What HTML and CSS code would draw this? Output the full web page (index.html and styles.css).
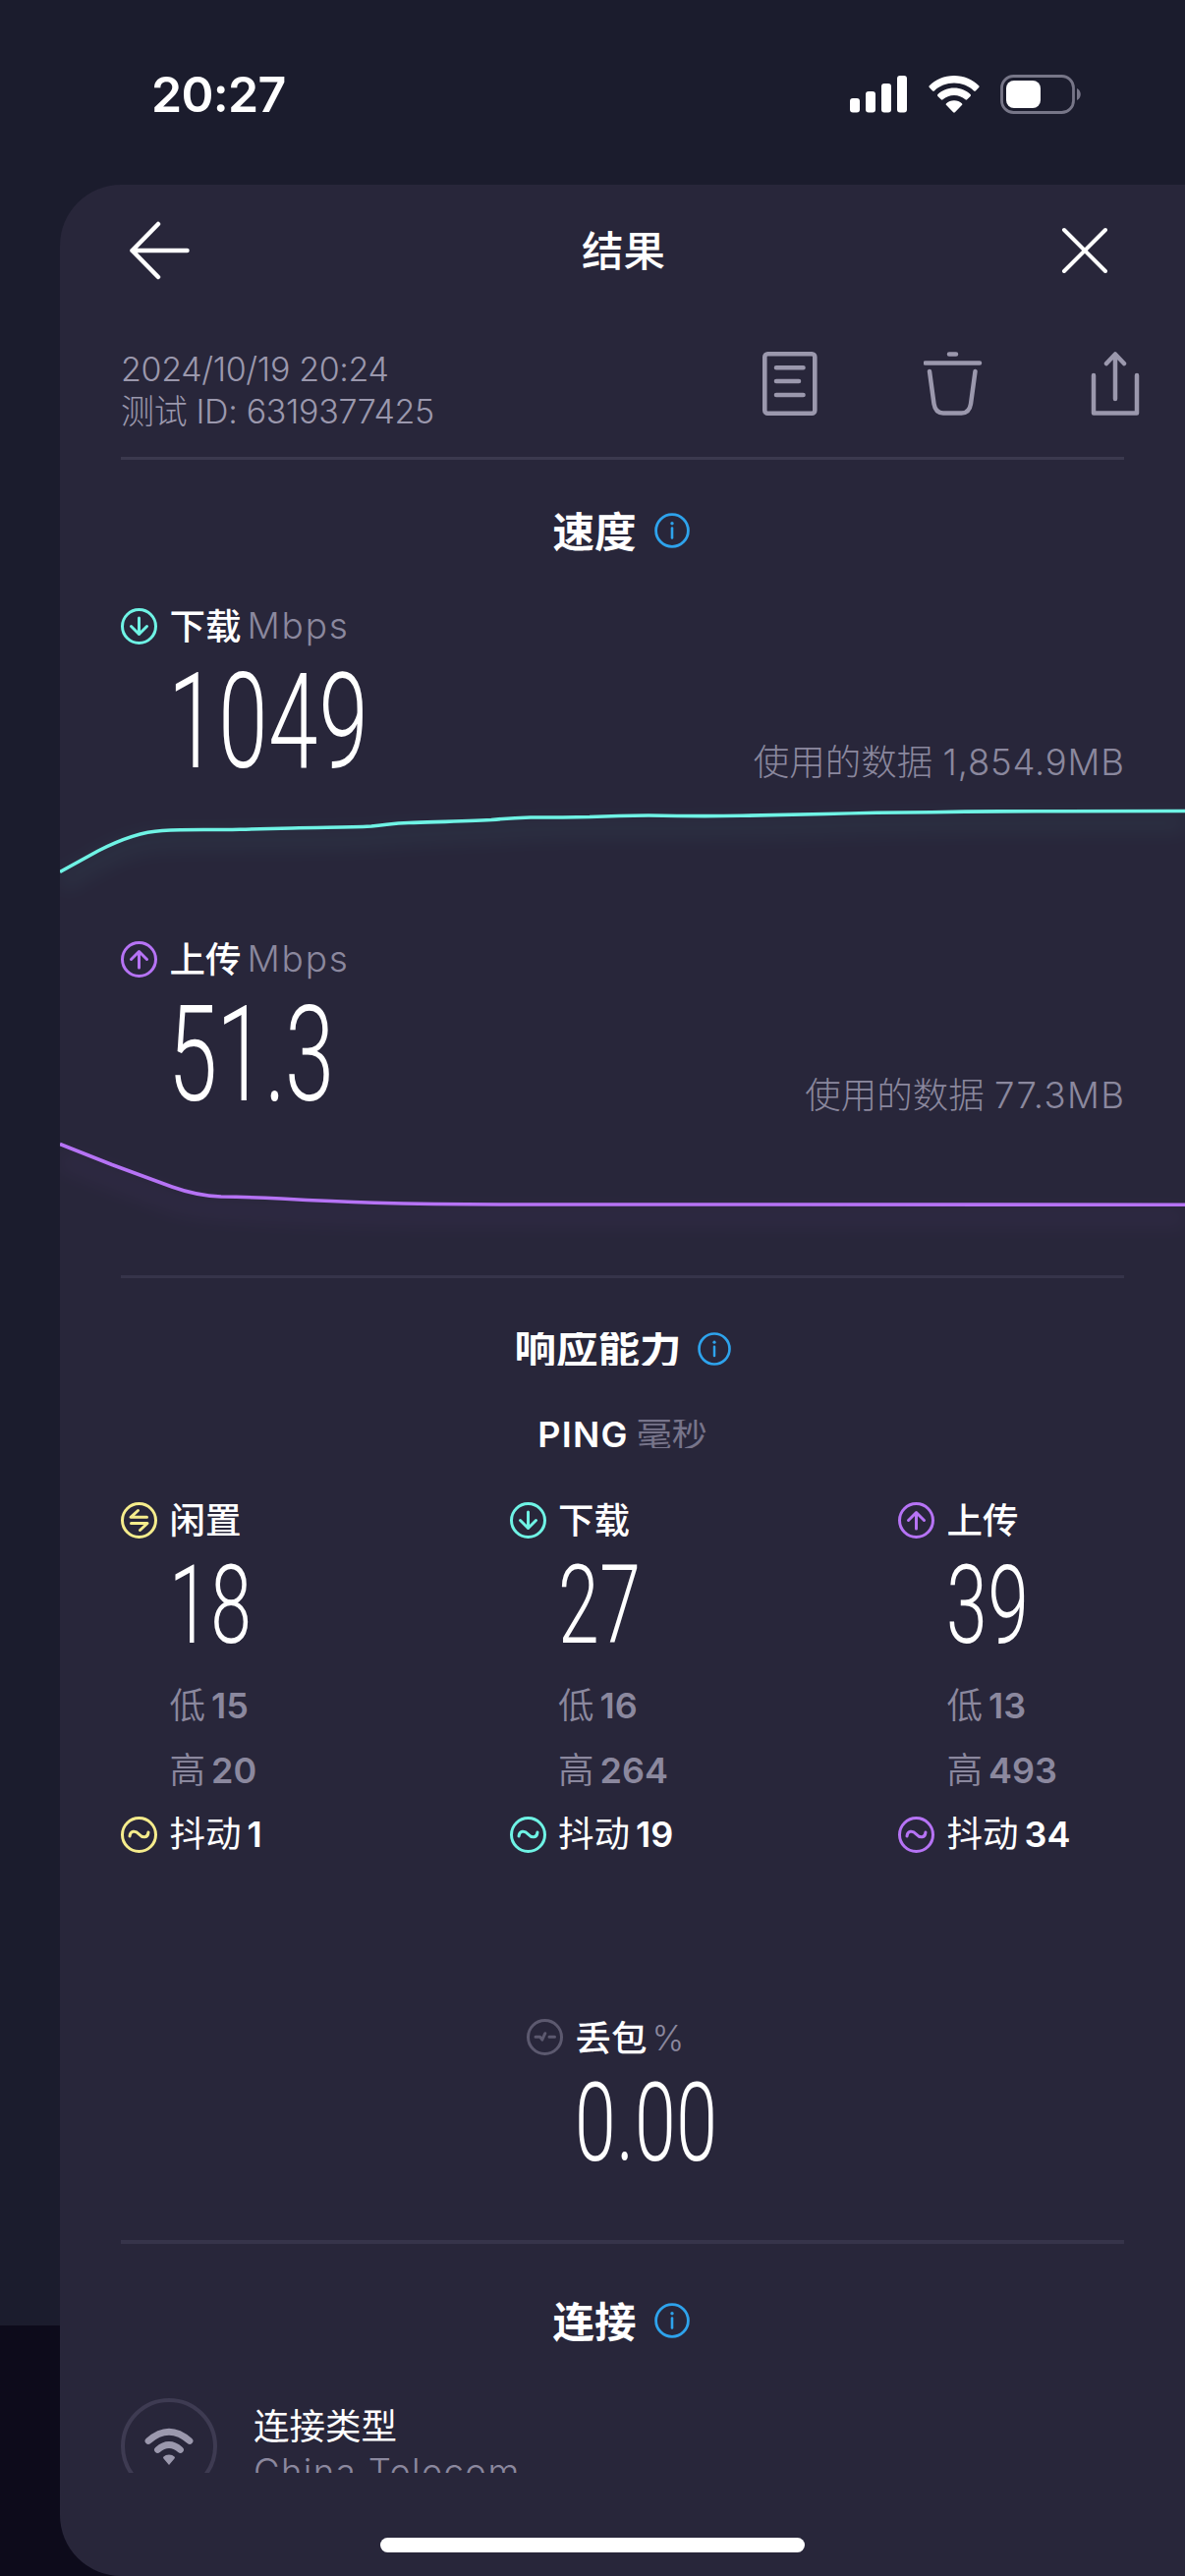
FILE: index.html
```html
<!DOCTYPE html>
<html lang="zh-CN">
<head>
<meta charset="utf-8">
<title>结果</title>
<link rel="stylesheet" href="styles.css">
</head>
<body>
<svg class="defs" width="0" height="0">
  <symbol id="i-info" viewBox="0 0 36 36"><circle cx="18" cy="18" r="16.4" stroke-width="2.8"/><circle cx="18" cy="10.8" r="1.7" fill="currentColor" stroke="none"/><path d="M18 15.5V25.5" stroke-width="2.6"/></symbol>
  <symbol id="i-down" viewBox="0 0 37 37"><circle cx="18.5" cy="18.5" r="17"/><path d="M18.5 10v16.5M10.5 18.5l8 8 8-8"/></symbol>
  <symbol id="i-up" viewBox="0 0 37 37"><circle cx="18.5" cy="18.5" r="17"/><path d="M18.5 27V10.5M10.5 18.5l8-8 8 8"/></symbol>
  <symbol id="i-idle" viewBox="0 0 37 37"><circle cx="18.5" cy="18.5" r="17"/><path d="M17.5 8.5L10 15.3H26.5M10.5 21.5H27L19.5 28.5"/></symbol>
  <symbol id="i-jitter" viewBox="0 0 37 37"><circle cx="18.5" cy="18.5" r="17"/><path d="M9 20c.5-5.500 5.500-6.500 9.500-2s9 3.500 9.500-2"/></symbol>
  <symbol id="i-loss" viewBox="0 0 37 37"><circle cx="18.500" cy="18.500" r="17"/><path d="M9 18.200h4.500l2.300 3 3-6.500M23 18.200h5.500" stroke-width="3"/></symbol>
</svg>

<div class="statusbar">
  <span class="clock">20:27</span>
  <div class="indicators">
    <svg width="58" height="38" viewBox="0 0 58 38" fill="#fff"><rect y="23" width="10" height="14.500" rx="3"/><rect x="16" y="16" width="10" height="21.500" rx="3"/><rect x="32" y="8" width="10" height="29.500" rx="3"/><rect x="48" y="0" width="10" height="37.500" rx="3"/></svg>
    <svg width="52" height="38" viewBox="0 0 52 38" fill="#fff"><path d="M26 0C16 0 7 4 .8 10.200q-.9.900 0 1.800l3.300 3.400q.9.900 1.800 0C11.200 10.500 18.200 7.600 26 7.600s14.800 2.900 20.100 7.800q.9.900 1.800 0l3.300-3.400q.9-.9 0-1.800C45 4 36 0 26 0Z"/><path d="M26 12.600c-6.500 0-12.300 2.500-16.600 6.500q-.9.900 0 1.800l3.400 3.400q.9.900 1.800 0c3-2.700 7-4.400 11.400-4.400s8.400 1.700 11.400 4.400q.9.900 1.800 0l3.400-3.400q.9-.9 0-1.800c-4.300-4-10.100-6.500-16.600-6.500Z"/><path d="M26 25.200c-3.100 0-5.900 1.200-7.900 3.100q-.9.800 0 1.700l7 7.200q.9.900 1.800 0l7-7.200q.9-.9 0-1.700c-2-1.900-4.800-3.100-7.900-3.100Z"/></svg>
    <svg width="83" height="40" viewBox="0 0 83 40"><rect x="1.500" y="1.500" width="73" height="37" rx="12" fill="none" stroke="#777688" stroke-width="2.800"/><rect x="6" y="6" width="35" height="28" rx="8" fill="#fff"/><path d="M78 14c5 2 5 10 0 12Z" fill="#777688"/></svg>
  </div>
</div>

<main class="sheet">
  <header class="topbar">
    <svg class="stroke" width="62" height="60" viewBox="0 0 62 60" stroke-width="4.500"><path d="M30 3L3.500 30 30 57M3.500 30H59.500"/></svg>
    <h1>结果</h1>
    <svg class="stroke" width="48" height="48" viewBox="0 0 48 48" stroke-width="4"><path d="M3 3l42 42M45 3L3 45"/></svg>
  </header>

  <section class="meta">
    <div class="meta-text"><div class="date">2024/10/19 20:24</div><div class="test-id">测试 ID: 6319377425</div></div>
    <div class="actions">
      <svg class="stroke" width="56" height="66" viewBox="0 0 56 66" stroke-width="4.600"><rect x="2.300" y="2.300" width="51" height="60.500" rx="3"/><path d="M14 16.200H41.500M14 30H37M14 44H41.500"/></svg>
      <svg class="stroke" width="62" height="66" viewBox="0 0 62 66" stroke-width="4.500"><path d="M26 2.500H33M1.500 11.500H57M6 20L10.500 53Q12 62.500 20 62.500H38.500Q46.500 62.500 48 53L52.500 20"/></svg>
      <svg class="stroke" width="50" height="66" viewBox="0 0 50 66" stroke-width="4.500"><path d="M3 24V62.500H47V24M25 48V3M16 12L25 2.500 34 12"/></svg>
    </div>
  </section>

  <section class="speed">
    <h2>速度<svg class="info"><use href="#i-info"/></svg></h2>
    <div class="metric">
      <div class="label"><svg class="icon teal"><use href="#i-down"/></svg><b>下载</b><span class="unit">Mbps</span></div>
      <div class="reading"><span class="big">1049</span><span class="used">使用的数据 <span class="amount">1,854.9MB</span></span></div>
      <svg class="chart" width="1145" height="152" viewBox="61 800 1145 152"><path class="glow teal" d="M61 899C105 875 125 858 165 856C220 854 330 856 378 853C430 848 490 848 527 845C600 841 700 846 840 841C1000 837 1100 838 1206 838"/><path class="line teal" d="M61 887.500L100 866Q137 847 165 845.500C195 843.500 220 845 244 844.300Q270 843.500 297 843C330 842 352 842.500 378 841C395 839.500 400 838 416 837.500C445 836.500 475 836 500 834.500Q520 832.500 540 832Q575 832 600 831.500Q630 830 660 830Q710 831 755 830.300Q800 829.500 840 828.500Q890 827 948 826.700Q1010 825.500 1083 825.800L1206 825.500"/></svg>
    </div>
    <div class="metric upload">
      <div class="label"><svg class="icon purple"><use href="#i-up"/></svg><b>上传</b><span class="unit">Mbps</span></div>
      <div class="reading"><span class="big">51.3</span><span class="used">使用的数据 <span class="amount">77.3MB</span></span></div>
      <svg class="chart" width="1145" height="158" viewBox="61 1139.500 1145 158"><path class="glow purple" d="M61 1180L175 1224Q200 1232 240 1233Q330 1238 443 1239L1206 1240"/><path class="line purple" d="M61 1165L114 1186L175 1208.500Q200 1217.500 225 1218.500Q255 1219 286 1220.500Q340 1223.500 381 1224.700Q450 1226.500 540 1226.500L1206 1226.700"/></svg>
    </div>
  </section>

  <section class="response">
    <h2 class="clipped">响应能力<svg class="info small"><use href="#i-info"/></svg></h2>
    <h3><b>PING</b><span>毫秒</span></h3>
    <div class="grid">
      <div class="cell">
        <div class="label"><svg class="icon yellow"><use href="#i-idle"/></svg><b>闲置</b></div>
        <div class="big mid">18</div>
        <div class="stat">低<b>15</b></div>
        <div class="stat">高<b>20</b></div>
        <div class="jitter"><svg class="icon yellow"><use href="#i-jitter"/></svg>抖动<b>1</b></div>
      </div>
      <div class="cell">
        <div class="label"><svg class="icon teal"><use href="#i-down"/></svg><b>下载</b></div>
        <div class="big mid">27</div>
        <div class="stat">低<b>16</b></div>
        <div class="stat">高<b>264</b></div>
        <div class="jitter"><svg class="icon teal"><use href="#i-jitter"/></svg>抖动<b>19</b></div>
      </div>
      <div class="cell">
        <div class="label"><svg class="icon purple"><use href="#i-up"/></svg><b>上传</b></div>
        <div class="big mid">39</div>
        <div class="stat">低<b>13</b></div>
        <div class="stat">高<b>493</b></div>
        <div class="jitter"><svg class="icon purple"><use href="#i-jitter"/></svg>抖动<b>34</b></div>
      </div>
    </div>
    <div class="loss">
      <div class="label"><svg class="icon dim"><use href="#i-loss"/></svg><b>丢包</b><span class="unit percent">%</span></div>
      <div class="big mid">0.00</div>
    </div>
  </section>

  <section class="connection">
    <h2>连接<svg class="info"><use href="#i-info"/></svg></h2>
    <div class="conn-row">
      <svg class="conn-icon" width="98" height="98" viewBox="0 0 98 98"><circle cx="49" cy="49" r="47" fill="none" stroke="#3e3b52" stroke-width="4"/><g fill="none" stroke="#9b98ad" stroke-width="6.800" stroke-linecap="round"><path d="M28 43.500Q49 25 70 43.500"/><path d="M37.500 52.500Q49 42.500 60.500 52.500"/></g><path d="M49 57.500q3.500 0 5.500 2 1 1 0 2L49 68l-5.500-6.500q-1-1 0-2 2-2 5.500-2Z" fill="#9b98ad"/></svg>
      <div class="conn-text"><div>连接类型</div><div class="carrier">China Telecom</div></div>
    </div>
  </section>
  <div class="home-indicator"></div>
</main>
</body>
</html>
```

FILE: styles.css
```css
* { box-sizing: border-box; }
html, body { margin: 0; padding: 0; }
body {
  width: 1206px;
  height: 2622px;
  overflow: hidden;
  background: linear-gradient(#1b1c2d 0 2367px, #0d0b1b 2367px);
  color: #fff;
  font-family: "Inter", "Noto Sans CJK SC", sans-serif;
  font-size: 36.5px;
}
.defs { display: block; width: 0; height: 0; }
svg { display: block; flex: none; }
h1, h2, h3 { margin: 0; }
b { font-weight: 500; }

.statusbar {
  height: 188px;
  padding: 68px 105px 0 154px;
  display: flex;
  justify-content: space-between;
  align-items: flex-start;
}
.clock { font-size: 50px; line-height: 56px; font-weight: 600; letter-spacing: -.7px; }
.indicators { display: flex; align-items: center; gap: 21.500px; padding-top: 8px; }

.sheet {
  margin-left: 61px;
  height: 2434px;
  background: #28263a;
  border-radius: 62px 0 0 62px;
  overflow: hidden;
}
.stroke { fill: none; stroke: currentColor; stroke-linecap: round; stroke-linejoin: round; }

.topbar {
  height: 134px;
  padding: 0 78px 0 70px;
  display: flex;
  align-items: center;
  justify-content: space-between;
}
h1 { font-size: 42.500px; font-weight: 500; line-height: 60px; padding: 2px 4px 0 0; }

.meta {
  height: 146px;
  margin: 0 62px;
  padding-top: 32px;
  border-bottom: 3px solid #3b394e;
  display: flex;
  justify-content: space-between;
  color: #9b98ad;
}
.meta-text { font-size: 34px; font-weight: 300; line-height: 43px; letter-spacing: -.35px; }
.actions { display: flex; gap: 108px; padding-top: 4px; margin-right: -16px; }

h2 {
  height: 60px;
  padding: 3px 3px 0 0;
  display: flex;
  align-items: center;
  justify-content: center;
  font-size: 42.5px;
  line-height: 60px;
  font-weight: 600;
}
.info { width: 36px; height: 36px; margin: -4px 0 0 18px; fill: none; stroke: currentColor; stroke-linecap: round; color: #2ea3ec; }
.info.small { width: 34px; height: 34px; margin: 0 0 0 16px; }

.speed { padding-top: 42px; height: 830px; }
.speed h2 { margin-bottom: 43px; }
.metric { height: 339px; }
.label { height: 48px; line-height: 48px; display: flex; align-items: center; }
.label b { padding-top: 2px; }
.metric .label, .metric .reading { margin: 0 62px; }
.icon { width: 37px; height: 37px; margin-right: 12.500px; fill: none; stroke: currentColor; stroke-width: 3; stroke-linecap: round; stroke-linejoin: round; }
.teal { color: #6ff3e5; }
.purple { color: #b673f5; }
.yellow { color: #f5ec8c; }
.dim { color: #5c596f; }
.unit { margin-left: 6px; font-weight: 300; color: #8b889e; font-size: 37px; letter-spacing: 1.800px; }
.unit.percent { margin-left: 5px; font-size: 35px; }
.reading { height: 139px; display: flex; justify-content: space-between; }
.big {
  font-family: "Roboto", sans-serif;
  font-weight: 350;
  font-size: 135px;
  line-height: 149px;
  height: 139px;
  margin-left: 48px;
  letter-spacing: 1.500px;
  white-space: nowrap;
  transform: scaleX(.67);
  transform-origin: 0 50%;
}
.upload .big { letter-spacing: -1.500px; }
.big.mid { font-size: 112px; line-height: 125px; height: 122px; margin-left: 49px; letter-spacing: 1px; }
.used { align-self: flex-end; line-height: 47px; font-weight: 300; color: #8b889e; white-space: nowrap; }
.amount { letter-spacing: .8px; margin-right: -.8px; }
.upload .amount { letter-spacing: 1.400px; margin-right: -1.400px; }
.chart { overflow: hidden; }
.line { fill: none; stroke: currentColor; stroke-width: 3.600; }
.glow { fill: none; stroke: currentColor; stroke-width: 22; opacity: .04; filter: blur(9px); }

.response { margin: 0 62px; height: 986px; padding-top: 55px; border-top: 3px solid #36344a; border-bottom: 4px solid #36344a; }
h2.clipped { height: 34px; line-height: 36px; padding: 0; overflow: hidden; }
h3 { height: 29px; margin-top: 55px; overflow: hidden; display: flex; justify-content: center; line-height: 31px; font-size: 36px; font-weight: 400; }
h3 b { font-weight: 600; letter-spacing: 1.300px; }
h3 span { margin-left: 8px; color: #77748a; }
.grid { display: grid; grid-template-columns: repeat(3, 395.500px); margin-top: 49px; }
.stat, .jitter { height: 65.500px; line-height: 65px; display: flex; align-items: center; padding-top: 2px; }
.stat { padding-left: 49.500px; color: #8b889e; font-weight: 350; }
.mid + .stat { margin-top: 10px; }
.stat b, .jitter b { margin-left: 6px; font-weight: 600; font-size: 36px; }
.jitter { font-weight: 400; }
.jitter .icon { margin-top: -1px; }
.loss { margin: 150px 0 0 413px; }

.connection { padding-top: 48px; }
.conn-row { height: 76px; margin: 49px 62px 0; overflow: hidden; display: flex; gap: 37px; }
.conn-text { padding-top: 6px; line-height: 46px; }
.carrier { font-weight: 300; color: #8b889e; letter-spacing: 1.400px; }
.home-indicator { width: 432px; height: 15px; margin: 66px 0 0 326px; border-radius: 8px; background: #fff; }
```
